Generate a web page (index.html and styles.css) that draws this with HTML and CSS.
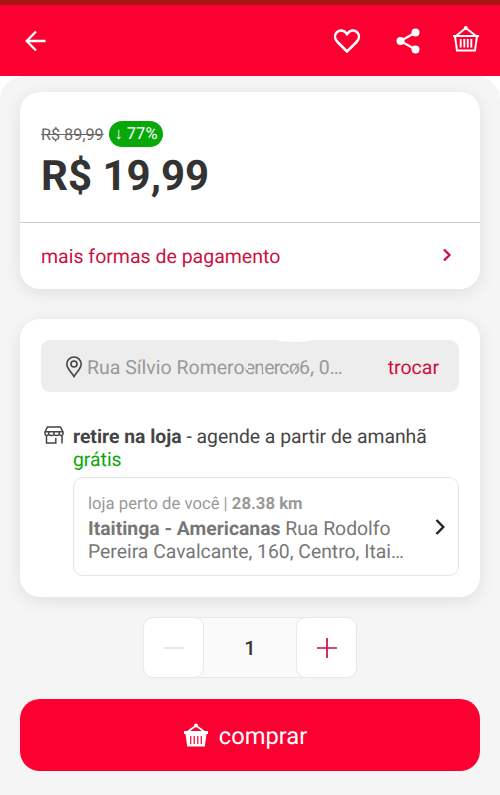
FILE: index.html
```html
<!DOCTYPE html>
<html lang="pt-BR">
<head>
<meta charset="utf-8">
<meta name="viewport" content="width=device-width, initial-scale=1">
<title>Produto</title>
<link rel="stylesheet" href="styles.css">
</head>
<body>
<header class="topbar">
  <svg class="back" viewBox="0 0 22 22"><path d="M20.5 11H2M11 1.5L1.7 11L11 20.5"/></svg>
  <svg class="heart" viewBox="0 0 28 26"><path d="M14 23.5L4.5 14C1.5 11 1.3 7 3.7 4.4C6.7 1.2 11.3 2 14 6C16.7 2 21.3 1.2 24.3 4.4C26.7 7 26.5 11 23.5 14Z"/></svg>
  <svg class="share" viewBox="0 0 24 26"><path d="M19.5 4.5L4.5 13L19.5 21.5"/><circle cx="19.5" cy="4.5" r="4"/><circle cx="4.5" cy="13" r="4"/><circle cx="19.5" cy="21.5" r="4"/></svg>
  <svg class="basket" viewBox="0 0 28 28"><path d="M1 11H27M3 11L5 25.6H23L25 11M4.5 10.5L13.8 3L23.5 10.5"/><path class="bars" d="M8.7 14V22.5M12.3 14V22.5M15.8 14V22.5M19.3 14V22.5"/><circle cx="13.8" cy="3" r="2"/></svg>
</header>
<main class="sheet">
  <section class="card price-card">
    <div class="price">
      <div class="old-row"><s class="old">R$ 89,99</s><span class="badge">↓ 77%</span></div>
      <div class="now">R$ 19,99</div>
    </div>
    <div class="payment"><span class="payment-label">mais formas de pagamento</span><svg class="chevron" viewBox="0 0 10 14"><path d="M2 1.5L7.5 7L2 12.5"/></svg></div>
  </section>
  <section class="card delivery">
    <div class="address">
      <svg class="pin" viewBox="0 0 18 22"><path d="M9 20.5C7 17 1.8 12.5 1.8 8.2A7.2 7.2 0 0 1 16.2 8.2C16.2 12.5 11 17 9 20.5Z"/><circle cx="9" cy="8" r="3"/></svg>
      <span class="street">Rua Sílvio Romero<span class="smudge">enerco<svg class="wipe" viewBox="0 0 66 16"><path d="M2 4V10M19 2V13M49 8V14"/><path class="ink" d="M47 13L54 3M67 12.5L69 11.5"/></svg></span>6, 0…</span>
      <span class="change">trocar</span>
    </div>
    <div class="pickup">
      <svg class="store" viewBox="0 0 20 19"><path d="M3.5 1H16.5L19 6V8.2C18.6 10 16 10 15.3 8.3C14.6 10 11 10 10 8.3C9 10 5.4 10 4.7 8.3C4 10 1.4 10 1 8.2V6ZM1 5.8H19M4.7 6V8.3M10 6V8.3M15.3 6V8.3M2.5 9.6V17H11.8V12M18 9.6V17.5"/></svg>
      <div class="pickup-body">
        <div class="pickup-title"><b>retire na loja</b> - agende a partir de amanhã</div>
        <div class="free">grátis</div>
        <div class="shop">
          <div class="shop-text">
            <div class="near">loja perto de você | <b>28.38 km</b></div>
            <div class="shop-name"><b>Itaitinga - Americanas</b> Rua Rodolfo</div>
            <div class="shop-street">Pereira Cavalcante, 160, Centro, Itai…</div>
          </div>
          <svg class="shop-chevron" viewBox="0 0 12 18"><path d="M2.5 2L9.3 9L2.5 16"/></svg>
        </div>
      </div>
    </div>
  </section>
  <div class="stepper">
    <div class="step"><svg class="minus" viewBox="0 0 22 22"><path d="M1 11H21"/></svg></div>
    <div class="count">1</div>
    <div class="step"><svg class="plus" viewBox="0 0 22 22"><path d="M1 11H21M11 1V21"/></svg></div>
  </div>
  <div class="buy">
    <svg class="buy-basket" viewBox="0 0 24 24"><path class="fill" d="M0 8H24V11H0ZM1.5 11H22.5L20.8 23.5H3.2Z"/><path class="handle" d="M4 8.5L12 2.5L20 8.5"/><path class="slots" d="M6.7 13V21M10.2 13V21M13.8 13V21M17.3 13V21"/><circle cx="12" cy="2.5" r="2"/></svg>
    <span class="buy-label">comprar</span>
  </div>
</main>
</body>
</html>
```
FILE: styles.css
```css
* { box-sizing: border-box; }
body { margin: 0; background: #fff; font-family: Roboto, "Liberation Sans", sans-serif; color: #444; white-space: nowrap; text-rendering: geometricPrecision; }
svg { display: block; flex: none; fill: none; stroke: currentColor; overflow: visible; }
.topbar { height: 76px; border-top: 5px solid #a91616; background: #fb0030; color: #fff; display: flex; align-items: center; padding: 0 20px 0 25px; }
.back { width: 22px; height: 22px; stroke-width: 2.3; }
.heart { width: 28px; height: 26px; margin-left: auto; stroke-width: 2.5; }
.share { width: 24px; height: 26px; margin-left: 35px; stroke-width: 2.2; }
.share circle { fill: currentColor; stroke: none; }
.basket { width: 28px; height: 28px; margin: -4px 0 0 32px; stroke-width: 2; }
.basket circle { fill: currentColor; stroke: none; }
.basket .bars { stroke-width: 1.9; }
.sheet { height: 719px; padding: 16px 20px 0; border-radius: 24px 24px 0 0; background: #f5f5f5; }
.card { background: #fff; border-radius: 20px; box-shadow: 0 4px 18px rgba(0,0,0,.09); }
.price-card { height: 197px; margin-bottom: 30px; }
.price { height: 131px; padding: 29px 21px 0; border-bottom: 1px solid #ccc; }
.old-row { display: flex; align-items: center; height: 26px; }
.old { font-size: 16.2px; color: #666; width: 63px; }
.badge { height: 26px; width: 54px; margin-left: 5px; border-radius: 13px; background: #08a80b; color: #fff; font-size: 16.5px; line-height: 28px; text-align: center; }
.now { margin-top: 4px; font-size: 42px; line-height: 51px; font-weight: 700; color: #333; }
.payment { height: 66px; padding: 0 28px 0 21px; display: flex; align-items: center; justify-content: space-between; color: #cc0f40; font-size: 19.5px; }
.chevron { width: 10px; height: 14px; margin-top: -2px; stroke-width: 2.3; }
.delivery { height: 278px; padding: 21px 21px 0; }
.address { position: relative; height: 52px; border-radius: 9px; background: #ededed; display: flex; align-items: center; padding: 2px 20px 0 24px; color: #999; font-size: 19.5px; }
.address::before { content: ""; position: absolute; left: 237px; top: -1px; width: 32px; height: 3px; border-radius: 0 0 50% 50%; background: #fff; }
.pin { width: 18px; height: 22px; stroke-width: 1.6; color: #444; margin-right: 4px; }
.smudge { position: relative; letter-spacing: -.8px; }
.wipe { position: absolute; left: 0; bottom: 3px; width: 66px; height: 16px; stroke: #ededed; stroke-width: 2; }
.wipe .ink { stroke: #aaa; stroke-width: 1.2; }
.change { margin-left: auto; color: #cc0f40; }
.pickup { display: flex; margin-top: 33px; }
.store { width: 20px; height: 19px; margin: 1px 9px 0 3px; stroke-width: 1.5; }
.pickup-body { flex: 1; min-width: 0; }
.pickup-title { font-size: 19.35px; line-height: 23px; }
.free { font-size: 19.35px; line-height: 23px; color: #08a80b; }
.shop { margin-top: 6px; height: 99px; border: 1.5px solid #e4e4e4; border-radius: 10px; display: flex; align-items: center; justify-content: space-between; padding: 3px 12px 0 14px; color: #777; }
.near { font-size: 16.7px; line-height: 24px; color: #999; }
.shop-name { font-size: 19.35px; line-height: 24px; }
.shop-street { font-size: 19.35px; line-height: 22px; }
.shop-chevron { width: 12px; height: 18px; stroke-width: 2.4; color: #222; margin-top: -2px; }
.stepper { width: 214px; height: 61px; margin: 20px auto 0; border: 1.5px solid #e8e8e8; border-radius: 10px; background: #fafafa; display: flex; justify-content: space-between; }
.step { width: 61px; height: 61px; margin: -1px; border: 1.5px solid #e8e8e8; border-radius: 10px; background: #fff; display: grid; place-items: center; }
.minus, .plus { width: 22px; height: 22px; stroke-width: 1.7; color: #e4e4e4; }
.plus { color: #cc0f40; }
.count { font-size: 20px; font-weight: 500; line-height: 61px; color: #333; }
.buy { height: 72px; margin-top: 21px; border-radius: 20px; background: #fb0030; color: #fff; display: flex; align-items: center; justify-content: center; gap: 11px; padding: 2px 9px 0 0; font-size: 23.7px; }
.buy-basket { width: 24px; height: 24px; margin-top: -2px; }
.buy-basket .fill, .buy-basket circle { fill: currentColor; stroke: none; }
.buy-basket .handle { stroke-width: 1.8; }
.buy-basket .slots { stroke: #fb0030; stroke-width: 1.2; }
```
